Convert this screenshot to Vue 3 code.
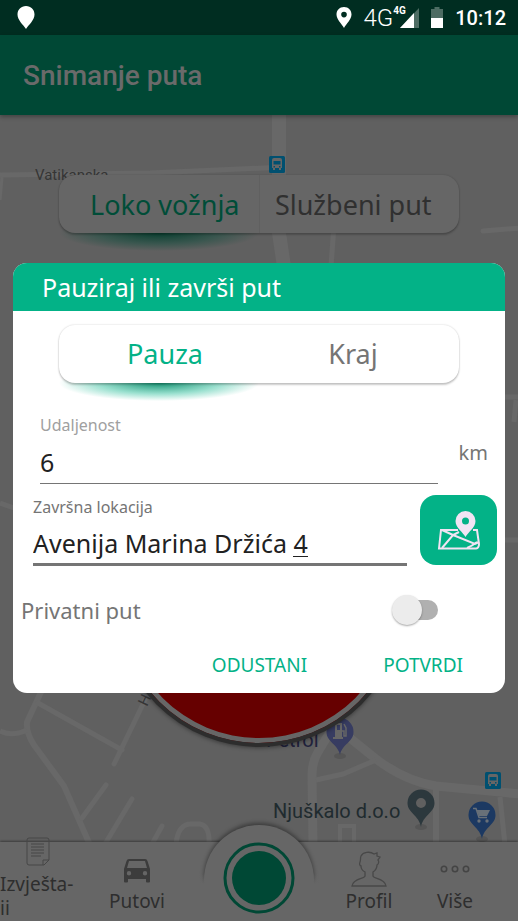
<script setup>
import { ref } from 'vue';

const tripType = ref('loko');
const tripTypes = [
  { id: 'loko', label: 'Loko vožnja' },
  { id: 'sluzbeni', label: 'Službeni put' },
];

const action = ref('pauza');
const actions = [
  { id: 'pauza', label: 'Pauza' },
  { id: 'kraj', label: 'Kraj' },
];

const distance = ref('6');
const location = ref('Avenija Marina Držića 4');
const isPrivate = ref(false);
const isVisible = ref(true);

// Close the dialog
const closeDialog = () => {
  isVisible.value = false;
};
</script>

<template>
  <div class="screen">
    <div class="status-bar">
      <svg class="status-pin" width="18" height="24" viewBox="0 0 18 24">
        <path d="M9 0C4 0 .5 3.600 .5 8.500 .5 14 6 18.500 9 23c3-4.500 8.500-9 8.500-14.500C17.500 3.600 14 0 9 0z" fill="#fff" />
      </svg>
      <div class="status-right">
        <svg width="16" height="22" viewBox="0 0 16 22">
          <path fill-rule="evenodd" d="M8 0C3.500 0 .5 3.300 .5 7.500 .5 12.500 5.500 16.500 8 21c2.500-4.500 7.500-8.500 7.500-13.500C15.500 3.300 12.500 0 8 0zm0 4.800a2.800 2.800 0 1 1 0 5.600 2.800 2.800 0 0 1 0-5.600z" fill="#fff" />
        </svg>
        <div class="network">
          <span class="network-type">4G</span>
          <span class="signal">
            <svg width="20" height="20" viewBox="0 0 20 20">
              <path d="M20 0v20H1z" fill="#4d6c63" />
              <path d="M15 5v15H1z" fill="#fff" />
            </svg>
            <span class="signal-type">4G</span>
          </span>
        </div>
        <svg width="12" height="21" viewBox="0 0 12 21">
          <path d="M3.500 0h5v2H12v9H0V2h3.500z" fill="#4d6c63" />
          <path d="M0 11h12v10H0z" fill="#fff" />
        </svg>
        <span class="clock">10:12</span>
      </div>
    </div>

    <header class="app-bar">
      <h1>Snimanje puta</h1>
    </header>

    <main class="content">
      <svg class="map" viewBox="0 115 518 806" preserveAspectRatio="xMidYMin slice">
        <g class="roads">
          <path d="M0 175L150 173 285 167" stroke-width="5" />
          <path d="M2 177L0 200" stroke-width="3" />
          <path d="M279 115V233L286 280" stroke-width="14" />
          <path d="M334 225L330 280" stroke-width="5" />
          <path d="M483 231L520 228" stroke-width="5" stroke-linecap="round" />
          <path d="M490 397H520M516 400L514 422" stroke-width="5" />
          <path d="M0 503L20 510M490 540H520" stroke-width="5" />
          <path d="M42 690L27 722Q26 733 34 745L64 786 90 845" stroke-width="6" />
          <path d="M0 731Q12 737 27 730" stroke-width="5" />
          <path d="M38 703L122 750M145 700L114 764" stroke-width="5" stroke-linecap="round" />
          <path d="M82 818L106 785M105 844L132 799M152 844L162 826" stroke-width="5" stroke-linecap="round" />
          <path d="M176 844Q178 824 191 824H200Q210 826 209 844" stroke-width="5" />
          <path d="M330 732L318 752Q312 762 312 775L313 845" stroke-width="9" />
          <path d="M340 730L376 759Q405 781 436 786L520 794" stroke-width="9" />
          <path d="M316 780L343 774 376 760" stroke-width="5" />
          <path d="M436 786V845" stroke-width="6" />
          <path d="M500 797L505 845" stroke-width="5" />
          <path d="M340 845V826H354V845" stroke-width="4" />
        </g>

        <text class="street" x="35" y="180">Vatikanska</text>
        <text class="street" x="0" y="0" transform="translate(147 707) rotate(-65)">H</text>
        <text class="fuel-label" x="266" y="747">Petrol</text>
        <text class="place-label" x="273" y="818">Njuškalo d.o.o</text>

        <g v-for="stop in [[269, 156], [485, 772]]" :key="stop[0]" :transform="`translate(${stop[0]} ${stop[1]})`">
          <rect width="16" height="17" rx="1.500" fill="#005070" />
          <path fill-rule="evenodd" d="M3 4Q3 2 5 2h6q2 0 2 2v8h-1v2h-2v-2H6v2H4v-2H3zm1.500 1v3.500h7V5zM4.500 10v1.500H6V10zm5.500 0v1.500h1.500V10z" fill="#666" />
        </g>

        <g transform="translate(340 732)">
          <ellipse cy="24" rx="6" ry="3" fill="#555" />
          <path d="M0-14A13.500 13.500 0 0 0-13.500 0C-13.500 10-2 12 0 23 2 12 13.500 10 13.500 0A13.500 13.500 0 0 0 0-14z" fill="#373c61" />
          <path fill-rule="evenodd" d="M-5-9H2V5H3V7H-7V5H-5zM-3-7V-2H0V-7z" fill="#666" />
          <path d="M2-1H4V4H6V-4L4-8" fill="none" stroke="#666" stroke-width="1.500" />
        </g>

        <g transform="translate(421 803)">
          <ellipse cy="24" rx="6" ry="3" fill="#555" />
          <path fill-rule="evenodd" d="M0-13.500A13.500 13.500 0 0 0-13.500 0C-13.500 10-2 12 0 24 2 12 13.500 10 13.500 0A13.500 13.500 0 0 0 0-13.500zM0-5A5 5 0 1 1 0 5 5 5 0 0 1 0-5z" fill="#2c383d" />
        </g>

        <g transform="translate(482 815)">
          <ellipse cy="24" rx="6" ry="3" fill="#555" />
          <path d="M0-13.500A13.500 13.500 0 0 0-13.500 0C-13.500 10-2 12 0 24 2 12 13.500 10 13.500 0A13.500 13.500 0 0 0 0-13.500z" fill="#1c3962" />
          <path d="M-9-6.500H-6L-3 2.500H5" fill="none" stroke="#687078" stroke-width="1.500" />
          <path d="M-5.500-5H8L5 1H-3z" fill="#687078" />
          <circle cx="-3" cy="6" r="1.700" fill="#687078" />
          <circle cx="5" cy="6" r="1.700" fill="#687078" />
        </g>
      </svg>

      <div class="segmented dimmed" :class="{ second: tripType === 'sluzbeni' }">
        <div class="pill">
          <button
            v-for="item in tripTypes"
            :key="item.id"
            type="button"
            :class="{ active: tripType === item.id }"
            @click="tripType = item.id"
          >{{ item.label }}</button>
        </div>
      </div>

      <button class="record" type="button" aria-label="Stop"></button>
    </main>

    <nav class="bottom-nav">
      <a href="#" class="nav-item reports">
        <svg width="24" height="29" viewBox="0 0 24 29" fill="none" stroke="#464646">
          <path d="M3 1h18q2 0 2 2v20l-5 5H3q-2 0-2-2V3q0-2 2-2z" />
          <path d="M17 28v-5h6" />
          <path d="M5 7h13M5 10h13M5 13h13M5 16h13M5 19h10" />
        </svg>
        <span>Izvješta-<br />ii</span>
      </a>
      <a href="#" class="nav-item">
        <svg width="28" height="36" viewBox="0 1 28 36">
          <path fill-rule="evenodd" d="M6 9h16q2 0 2.500 2l2.500 8v12.500q0 1-1 1h-2q-1 0-1-1V29H5v2.500q0 1-1 1H2q-1 0-1-1V19l2.500-8Q4 9 6 9zm0 2L4 18h20l-2-7zM6 21a2.200 2.200 0 1 0 0 4.400A2.200 2.200 0 0 0 6 21zm16 0a2.200 2.200 0 1 0 0 4.400 2.200 2.200 0 0 0 0-4.400z" fill="#3c3c3c" />
        </svg>
        <span>Putovi</span>
      </a>
      <div class="home">
        <button class="home-button" type="button" aria-label="Snimanje">
          <svg width="72" height="72" viewBox="0 0 72 72">
            <circle cx="36" cy="36" r="34" fill="none" stroke="#004835" stroke-width="3" />
            <circle cx="36" cy="36" r="27" fill="#004835" />
          </svg>
        </button>
      </div>
      <a href="#" class="nav-item">
        <svg width="36" height="36" viewBox="0 0 36 36" fill="none" stroke="#484848" stroke-width="1.300">
          <path d="M14 21v4c0 3-12 2-13 10h34c-1-8-13-7-13-10v-4c3-2 4-4 4-7 2-1 2-4 1-5l2-3-3-1V2l-3 1C19 0 12 1 10 5c-1 2 0 4-1 6-1 2 0 4 1 4 0 3 2 5 4 6z" />
        </svg>
        <span>Profil</span>
      </a>
      <a href="#" class="nav-item">
        <svg width="30" height="36" viewBox="0 0 30 36" fill="none" stroke="#444" stroke-width="1.600">
          <circle cx="4" cy="18" r="2.700" />
          <circle cx="15" cy="18" r="2.700" />
          <circle cx="26" cy="18" r="2.700" />
        </svg>
        <span>Više</span>
      </a>
    </nav>

    <div v-if="isVisible" class="overlay">
      <form class="dialog" role="dialog" aria-labelledby="dialog-title" @submit.prevent="closeDialog">
        <h2 id="dialog-title">Pauziraj ili završi put</h2>

        <div class="segmented" :class="{ second: action === 'kraj' }">
          <div class="pill">
            <button
              v-for="item in actions"
              :key="item.id"
              type="button"
              :class="{ active: action === item.id }"
              @click="action = item.id"
            >{{ item.label }}</button>
          </div>
        </div>

        <div class="distance-row">
          <div class="field">
            <label for="distance">Udaljenost</label>
            <input id="distance" v-model="distance" type="text" inputmode="numeric" />
          </div>
          <span class="unit">km</span>
        </div>

        <div class="location-row">
          <div class="field">
            <label for="location">Završna lokacija</label>
            <input id="location" v-model="location" type="text" />
          </div>
          <button class="map-button" type="button" aria-label="Karta">
            <svg width="44" height="40" viewBox="0 0 44 40">
              <g fill="none" stroke="#f1e4f4" stroke-width="2">
                <path d="M21 20H4L2 38.500H39Q42 38 42 34L40 20H36" />
                <path d="M5 20L16 25 38 34 42 32M5 38L16 25 22 22M30 38Q35 36 40 32" />
              </g>
              <path fill-rule="evenodd" d="M28.500 1A10 10 0 0 0 18.500 11C18.500 18 26 22 28.500 27 31 22 38.500 18 38.500 11A10 10 0 0 0 28.500 1zm0 6.500a3.500 3.500 0 1 1 0 7 3.500 3.500 0 0 1 0-7z" fill="#f1e4f4" />
            </svg>
          </button>
        </div>

        <div class="private-row">
          <label for="private">Privatni put</label>
          <input id="private" v-model="isPrivate" class="toggle" type="checkbox" role="switch" />
        </div>

        <div class="actions">
          <button type="button" @click="closeDialog">ODUSTANI</button>
          <button type="submit">POTVRDI</button>
        </div>
      </form>
    </div>
  </div>
</template>

<style>
body {
  margin: 0;
  background: #606060;
}
</style>

<style scoped>
.screen {
  position: relative;
  display: flex;
  flex-direction: column;
  min-height: 100vh;
  overflow: hidden;
  background: #606060;
  font-family: 'Noto Sans', 'Open Sans', sans-serif;
}

* {
  box-sizing: border-box;
}

button,
input {
  margin: 0;
  padding: 0;
  border: none;
  background: none;
  font-family: inherit;
}

button {
  cursor: pointer;
}

.status-bar {
  display: flex;
  align-items: center;
  justify-content: space-between;
  height: 35px;
  padding: 0 12px 0 17px;
  background: #002d21;
  color: #fff;
  font-family: Roboto, sans-serif;
}

.status-right,
.network {
  display: flex;
  align-items: center;
}

.status-right {
  gap: 12px;
}

.network-type {
  font-size: 24px;
  font-weight: 300;
}

.signal {
  position: relative;
  display: flex;
  padding-left: 6px;
}

.signal-type {
  position: absolute;
  top: -3px;
  left: 0;
  font-size: 10px;
  font-weight: 700;
  line-height: 12px;
}

.clock {
  font-size: 20px;
  font-weight: 500;
}

.app-bar {
  position: relative;
  z-index: 1;
  display: flex;
  align-items: center;
  height: 80px;
  padding: 0 23px;
  background: #004835;
  box-shadow: 0 2px 4px rgba(0, 0, 0, 0.3);
}

h1 {
  margin: 0;
  color: #6a6a6a;
  font-family: Roboto, sans-serif;
  font-size: 28px;
  font-weight: 500;
}

.content {
  flex: 1;
  display: flex;
  flex-direction: column;
  align-items: center;
  padding-top: 60px;
}

.map {
  position: absolute;
  top: 115px;
  left: 0;
  width: 100%;
  height: calc(100% - 115px);
}

.roads path {
  fill: none;
  stroke: #686868;
}

.street {
  fill: #353535;
  font-family: Roboto, sans-serif;
  font-size: 15px;
}

.fuel-label,
.place-label {
  fill: #20223c;
  font-family: Roboto, sans-serif;
  font-size: 20px;
}

.place-label {
  fill: #1f2b2f;
}

.segmented {
  position: relative;
  isolation: isolate;
  align-self: stretch;
  margin: 0 46px;
}

.segmented.dimmed {
  margin: 0 59px;
}

/* Glow below the selected half */
.segmented::before {
  content: '';
  position: absolute;
  z-index: -1;
  bottom: -18px;
  left: 0;
  width: 50%;
  height: 36px;
  background: radial-gradient(closest-side, rgba(0, 140, 104, 0.9), rgba(3, 178, 135, 0.4) 60%, rgba(3, 178, 135, 0));
}

.segmented.second::before {
  left: 50%;
}

.segmented.dimmed::before {
  background: radial-gradient(closest-side, rgba(0, 60, 43, 0.9), rgba(0, 72, 53, 0.4) 60%, rgba(0, 72, 53, 0));
}

.pill {
  display: flex;
  height: 58px;
  border-radius: 16px;
  background: #fff;
  box-shadow: 0 0 2px rgba(0, 0, 0, 0.2), 0 2px 2px rgba(0, 0, 0, 0.2);
}

.dimmed .pill {
  background: #666;
}

.pill button {
  flex: 1;
  color: #757575;
  font-size: 27px;
}

.pill button:first-child {
  padding-left: 12px;
}

.pill button + button {
  padding-right: 12px;
}

.pill .active {
  color: #03b287;
}

.dimmed button {
  color: #303030;
}

.dimmed button + button {
  border-left: 1px solid #606060;
}

.dimmed .active {
  color: #004d38;
}

.record {
  position: relative;
  width: 290px;
  height: 290px;
  margin-top: 224px;
  border: 4px solid #2d2d2d;
  border-radius: 50%;
  background: #660000;
  box-shadow: inset 0 0 0 5px #666, 0 1px 4px rgba(0, 0, 0, 0.4);
}

.bottom-nav {
  position: relative;
  display: grid;
  grid-template-columns: 76fr 122fr 122fr 98fr 74fr;
  height: 79px;
  padding-right: 26px;
  background: #666;
  box-shadow: 0 -1px 2px rgba(0, 0, 0, 0.4);
}

.nav-item {
  display: flex;
  flex-direction: column;
  align-items: center;
  gap: 2px;
  padding-top: 9px;
  color: #2e2e2e;
  font-size: 19px;
  line-height: 24px;
  text-decoration: none;
}

.reports {
  gap: 6px;
  margin-top: -14px;
}

.reports span {
  align-self: flex-start;
}

/* Round bump that rises over the bar */
.home {
  position: relative;
  display: flex;
  justify-content: center;
}

.home::before {
  content: '';
  position: absolute;
  top: -17px;
  width: 110px;
  height: 110px;
  border-radius: 50%;
  background: #666;
  box-shadow: 0 -2px 4px rgba(0, 0, 0, 0.4);
}

.home::after {
  content: '';
  position: absolute;
  top: 32px;
  bottom: 0;
  width: 122px;
  background: linear-gradient(rgba(102, 102, 102, 0), #666 10px);
}

.home-button {
  position: relative;
  z-index: 1;
  width: 72px;
  height: 72px;
}

.home-button svg,
.map-button svg {
  display: block;
}

.overlay {
  position: absolute;
  z-index: 2;
  inset: 34px 0 0;
  display: flex;
  align-items: center;
  padding: 0 13px;
}

.dialog {
  flex: 1;
  overflow: hidden;
  border-radius: 14px;
  background: #fff;
}

h2 {
  margin: 0 0 14px;
  padding: 0 29px;
  background: #03b287;
  color: #fff;
  font-size: 25px;
  font-weight: 400;
  line-height: 48px;
}

.distance-row,
.location-row,
.private-row {
  display: flex;
  align-items: center;
}

.distance-row {
  gap: 21px;
  margin-top: 30px;
  padding: 0 17px 0 27px;
}

.field {
  flex: 1;
  min-width: 0;
}

.field label {
  display: block;
  color: #757575;
  font-size: 16px;
  line-height: 24px;
}

.field input {
  display: block;
  width: 100%;
  height: 47px;
  padding-top: 5px;
  border-bottom: 1px solid #757575;
  outline: none;
  color: #212121;
  font-size: 25px;
}

.distance-row label {
  color: #a0a0a0;
}

.unit {
  color: #757575;
  font-size: 20px;
  line-height: 24px;
  padding-top: 10px;
}

.location-row {
  gap: 13px;
  margin-top: 11px;
  padding: 0 8px 0 20px;
}

.location-row input {
  border-bottom-width: 3px;
  background: linear-gradient(#212121, #212121) 260px 37px / 15px 1px no-repeat;
}

.map-button {
  display: grid;
  place-items: center;
  width: 77px;
  height: 70px;
  border-radius: 16px;
  background: #03b287;
}

.private-row {
  justify-content: space-between;
  margin-top: 28px;
  padding: 0 67px 0 8px;
  color: #757575;
  font-size: 22px;
  line-height: 32px;
}

.toggle {
  position: relative;
  appearance: none;
  width: 40px;
  height: 20px;
  border-radius: 10px;
  background: #b0b0b0;
}

.toggle::before {
  content: '';
  position: absolute;
  top: -5px;
  left: -6px;
  width: 30px;
  height: 30px;
  border-radius: 50%;
  background: #ececec;
  box-shadow: 0 1px 2px rgba(0, 0, 0, 0.35);
}

.toggle:checked::before {
  left: 16px;
}

.actions {
  display: flex;
  justify-content: flex-end;
  gap: 76px;
  padding: 23px 42px 12px;
}

.actions button {
  color: #03b287;
  font-size: 19px;
  line-height: 32px;
}
</style>
